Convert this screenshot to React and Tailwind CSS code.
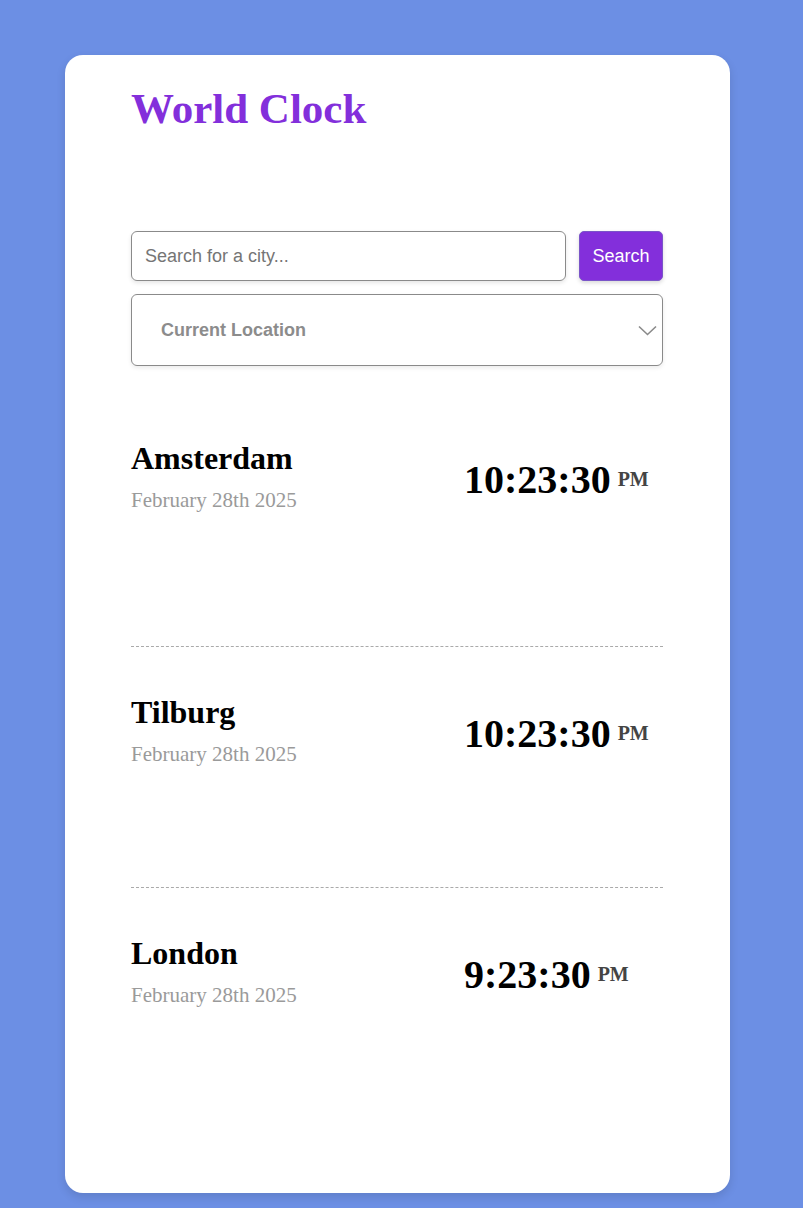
const cities = [
  { name: 'Amsterdam', date: 'February 28th 2025', time: '10:23:30', period: 'PM' },
  { name: 'Tilburg', date: 'February 28th 2025', time: '10:23:30', period: 'PM' },
  { name: 'London', date: 'February 28th 2025', time: '9:23:30', period: 'PM' },
];

const serif = { fontFamily: '"Liberation Serif", "Times New Roman", serif' };

const CityRow = ({ city, first, last }) => (
  <div
    className={`grid grid-cols-[333px_1fr] pt-[47px] ${first ? 'pb-[134px]' : 'pb-[121px]'} ${
      last ? '' : 'border-b border-dashed border-[#aaaaaa]'
    }`}
  >
    <div>
      <h2 className="text-[32px] leading-[36px] font-bold text-black">{city.name}</h2>
      <p className="mt-[12px] text-[21px] leading-[24px] text-[#9a9a9a]">{city.date}</p>
    </div>
    <div className="flex items-start mt-[16px]">
      <span className="text-[40px] leading-[48px] font-bold text-black">{city.time}</span>
      <span className="ml-[7px] mt-[13px] text-[20px] leading-[20px] font-bold text-[#444444]">
        {city.period}
      </span>
    </div>
  </div>
);

const App = () => {
  return (
    <div className="min-h-screen bg-[#6c8fe4] pt-[55px] pb-[15px]" style={serif}>
      <div className="ml-[65px] w-[665px] h-[1138px] bg-white rounded-[18px] shadow-[0_4px_10px_rgba(0,0,0,0.12)] pl-[66px] pr-[67px] pt-[29px]">
        <h1 className="text-[43px] leading-[50px] font-bold text-[#832fdb]">World Clock</h1>

        <div className="mt-[97px]" style={{ fontFamily: '"Liberation Sans", Arial, sans-serif' }}>
          <div className="flex gap-[13px]">
            <input
              type="text"
              placeholder="Search for a city..."
              className="flex-1 h-[50px] px-[13px] text-[18px] text-black placeholder:text-[#757575] border border-[#8a8a8a] rounded-[6px] shadow-[0_2px_4px_rgba(0,0,0,0.1)] outline-none"
            />
            <button className="w-[84px] h-[50px] bg-[#832fdb] text-white text-[18px] rounded-[5px] border border-[#7a55c8] shadow-[0_2px_4px_rgba(0,0,0,0.15)]">
              Search
            </button>
          </div>
          <div className="mt-[13px] h-[72px] flex items-center justify-between pl-[29px] pr-[5px] border border-[#8a8a8a] rounded-[6px] shadow-[0_2px_4px_rgba(0,0,0,0.08)]">
            <span className="text-[18px] font-bold text-[#8c8c8c]">Current Location</span>
            <svg width="19" height="11" viewBox="0 0 19 11" fill="none" className="mt-[1px]">
              <path d="M1 1.5 L9.5 9.5 L18 1.5" stroke="#8a8a8a" strokeWidth="1.6" />
            </svg>
          </div>
        </div>

        <div className="mt-[27px]">
          {cities.map((city, i) => (
            <CityRow key={city.name} city={city} first={i === 0} last={i === cities.length - 1} />
          ))}
        </div>
      </div>
    </div>
  );
};

export default App;
